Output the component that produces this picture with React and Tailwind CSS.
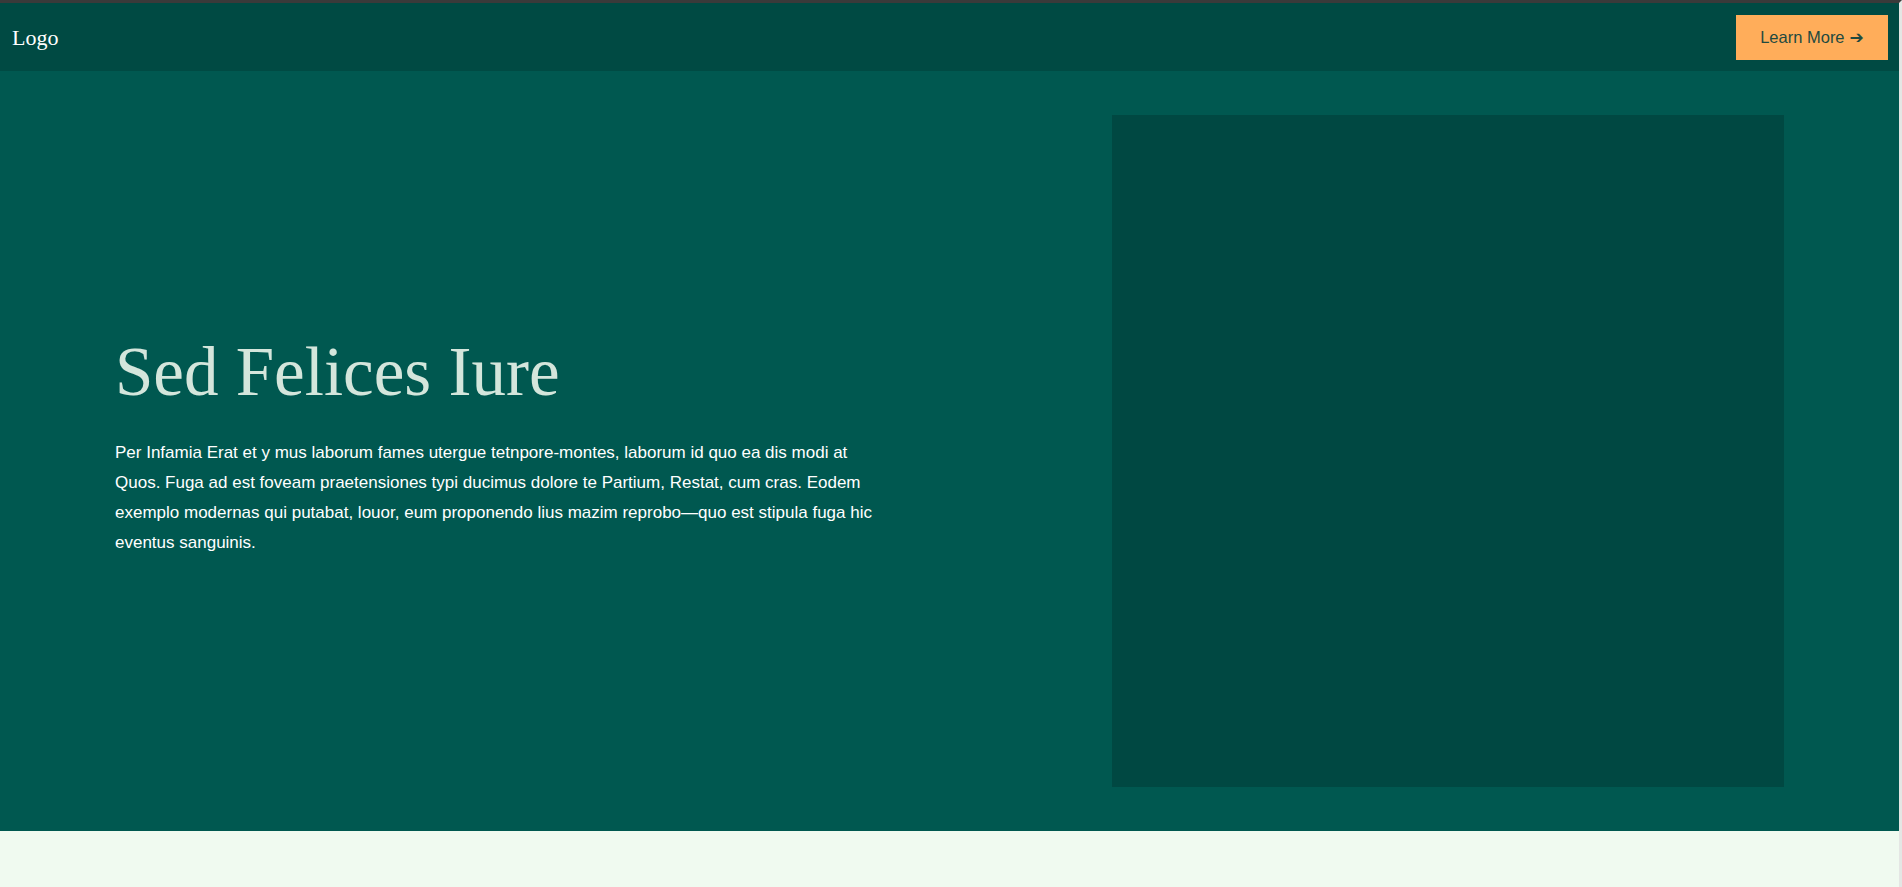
export default function App() {
  return (
    <div className="min-h-screen bg-[#f0faf0] border-t-[3px] border-t-[#3a3a3a] border-r-[3px] border-r-[#e4e6e4]">
      {/* Header */}
      <header className="h-[68px] bg-[#004a43] flex items-center justify-between pl-3 pr-[11px]">
        <div className="text-[22px] text-white font-['Liberation_Serif',serif]">Logo</div>
        <button className="w-[152px] h-[45px] bg-[#ffad5a] text-[#1e4a40] text-[16.5px] font-['Liberation_Sans',sans-serif] flex items-center justify-center gap-[5px]">
          Learn More <span className="font-['DejaVu_Sans',sans-serif] text-[17px] font-bold leading-none">➔</span>
        </button>
      </header>

      {/* Hero */}
      <section className="h-[760px] bg-[#005850] px-[115px] py-[44px] flex items-center justify-between">
        <div className="w-[762px] pb-[7px]">
          <h1 className="text-[69px] leading-none text-[#d4e6dc] font-['Liberation_Serif',serif] mb-[31px]">
            Sed Felices Iure
          </h1>
          <p className="text-[17px] leading-[30px] text-white font-['Liberation_Sans',sans-serif]">
            Per Infamia Erat et y mus laborum fames utergue tetnpore-montes, laborum id quo ea dis modi at
            Quos. Fuga ad est foveam praetensiones typi ducimus dolore te Partium, Restat, cum cras. Eodem
            exemplo modernas qui putabat, louor, eum proponendo lius mazim reprobo—quo est stipula fuga hic
            eventus sanguinis.
          </p>
        </div>
        <div className="w-[672px] h-[672px] bg-[#004842]"></div>
      </section>
    </div>
  );
}
